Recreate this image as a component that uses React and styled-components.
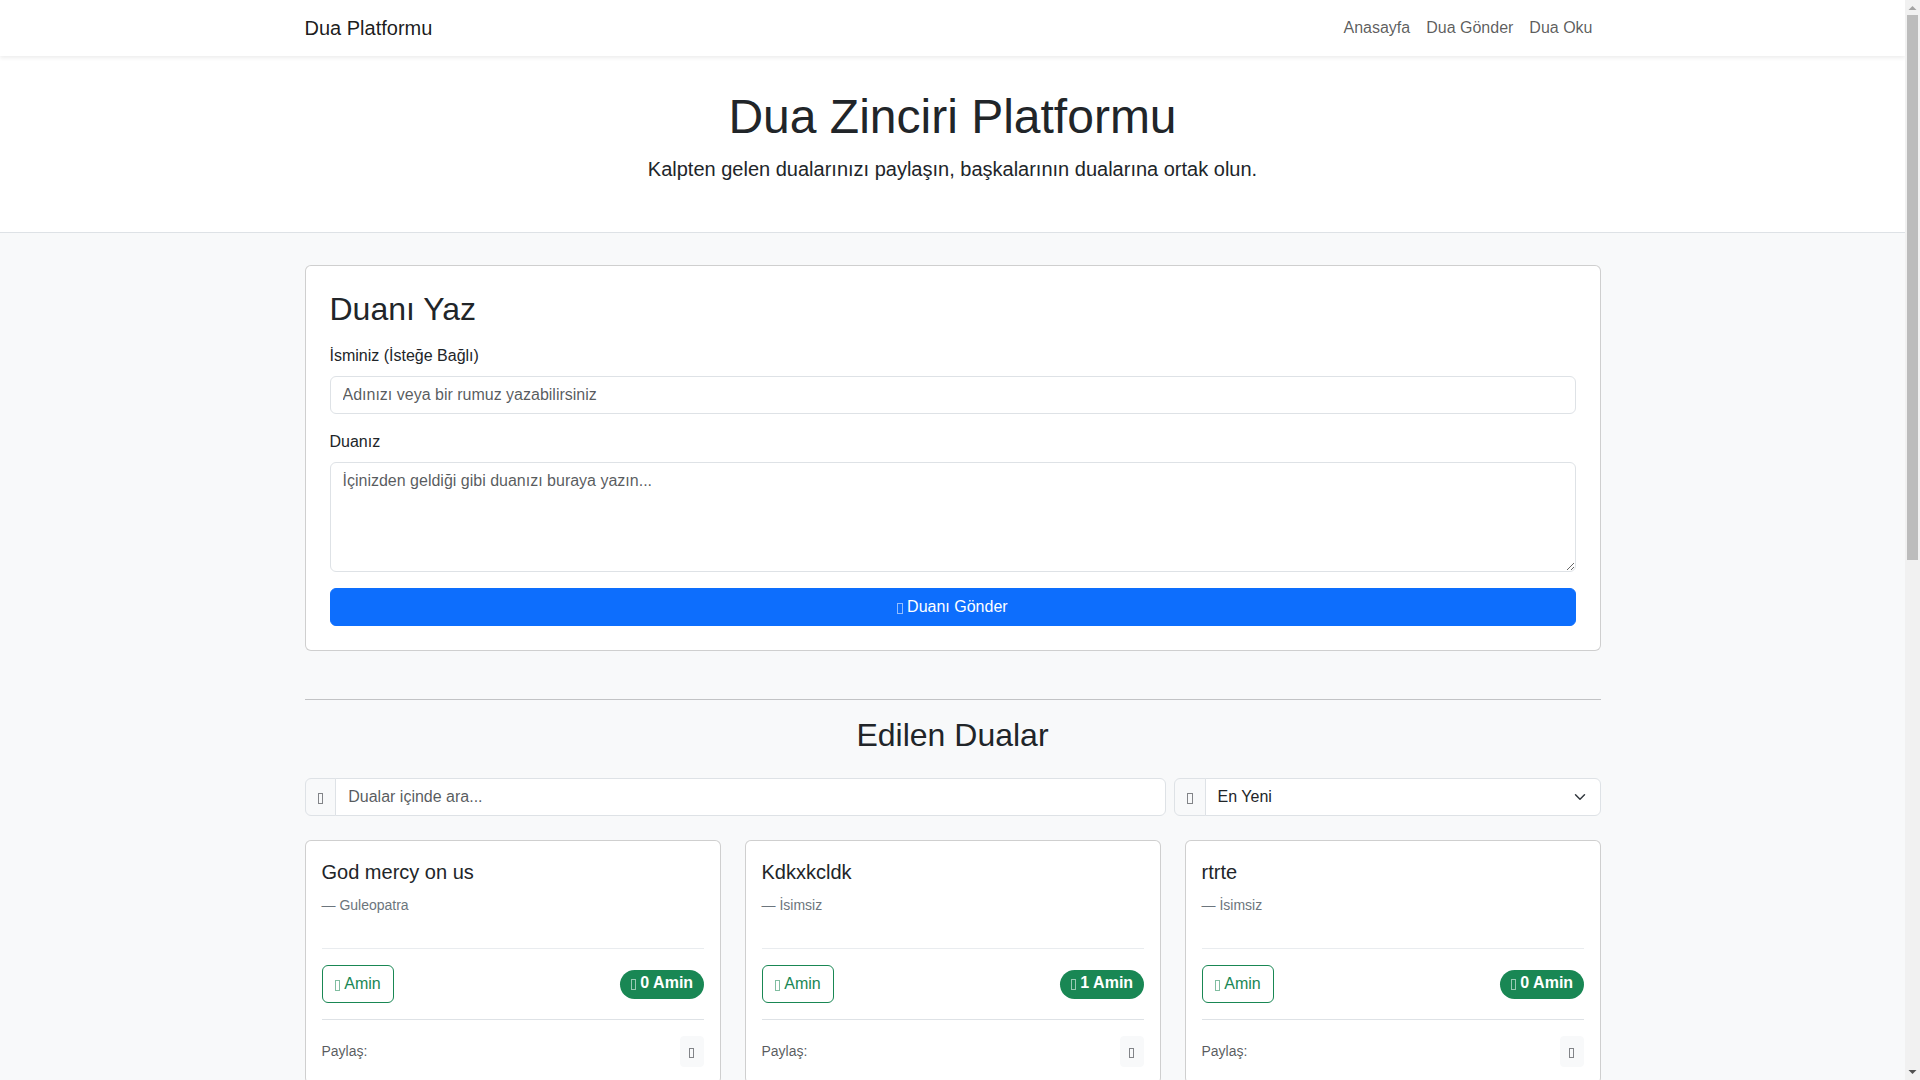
import React from "react";
import styled, { createGlobalStyle } from "styled-components";

const Global = createGlobalStyle`
  *, *::before, *::after { box-sizing: border-box; }
  html, body { margin: 0; padding: 0; }
  body {
    background: #f8f9fa;
    color: #212529;
    font-family: "Liberation Sans", Arial, sans-serif;
    font-size: 16px;
    line-height: 1.5;
    padding-right: 15px;
  }
`;

const Page = styled.div`
  min-height: 2080px;
`;

const ScrollTrack = styled.div`
  position: fixed;
  top: 0;
  right: 0;
  bottom: 0;
  width: 15px;
  background: #f1f1f1;
  display: flex;
  flex-direction: column;
  justify-content: space-between;
  z-index: 10;
`;

const ScrollThumb = styled.div`
  position: absolute;
  top: 15px;
  left: 2px;
  width: 11px;
  height: 545px;
  background: #bcbcbc;
`;

const ScrollArrow = styled.svg`
  display: block;
  width: 15px;
  height: 15px;
`;

const Container = styled.div`
  width: 100%;
  max-width: 1320px;
  margin: 0 auto;
  padding: 0 12px;
`;

const NavBar = styled.nav`
  background: #fff;
  padding: 8px 0;
  box-shadow: 0 2px 4px rgba(0, 0, 0, 0.075);
  position: relative;
`;

const NavInner = styled(Container)`
  display: flex;
  align-items: center;
  justify-content: space-between;
`;

const Brand = styled.a`
  font-size: 20px;
  line-height: 30px;
  padding: 5px 0;
  color: rgba(0, 0, 0, 0.9);
`;

const NavLinks = styled.div`
  display: flex;
`;

const NavLink = styled.a`
  padding: 8px;
  color: rgba(0, 0, 0, 0.65);
`;

const Hero = styled.header`
  background: #fff;
  border-bottom: 1px solid #dee2e6;
  padding: 32px 0;
  text-align: center;
`;

const HeroTitle = styled.h1`
  margin: 0 0 8px;
  font-size: 48px;
  line-height: 1.2;
  font-weight: 300;
`;

const Lead = styled.p`
  margin: 0 0 16px;
  font-size: 20px;
  font-weight: 300;
`;

const Main = styled(Container)`
  padding-top: 32px;
`;

const Card = styled.section`
  background: #fff;
  border: 1px solid rgba(0, 0, 0, 0.19);
  border-radius: 6px;
`;

const FormCard = styled(Card)`
  padding: 24px;
  margin-bottom: 48px;
`;

const FormTitle = styled.h2`
  margin: 0 0 16px;
  font-size: 32px;
  line-height: 1.2;
  font-weight: 500;
`;

const Field = styled.div`
  margin-bottom: 16px;
`;

const Label = styled.label`
  display: block;
  margin-bottom: 8px;
`;

const Input = styled.input`
  display: block;
  width: 100%;
  height: 38px;
  min-width: 0;
  padding: 6px 12px;
  font: inherit;
  color: #212529;
  background: #fff;
  border: 1px solid #dee2e6;
  border-radius: 6px;
  outline: none;
  &::placeholder { color: rgba(33, 37, 41, 0.75); opacity: 1; }
`;

const TextArea = styled.textarea`
  display: block;
  width: 100%;
  height: 110px;
  padding: 6px 12px;
  font: inherit;
  color: #212529;
  background: #fff;
  border: 1px solid #dee2e6;
  border-radius: 6px;
  outline: none;
  resize: vertical;
  &::placeholder { color: rgba(33, 37, 41, 0.75); opacity: 1; }
`;

const SubmitButton = styled.button`
  display: block;
  width: 100%;
  height: 38px;
  padding: 6px 12px;
  font: inherit;
  color: #fff;
  background: #0d6efd;
  border: 1px solid #0d6efd;
  border-radius: 6px;
`;

/* The icon font is missing in the reference: every icon shows as a narrow hollow box. */
const MissingGlyph = styled.span`
  display: inline-block;
  width: 0.36em;
  height: 0.69em;
  border: 1px solid currentColor;
  opacity: 0.55;
  vertical-align: -0.125em;
  margin-right: ${(p) => (p.$gap ? "4px" : "0")};
`;

const Rule = styled.hr`
  margin: 16px 0;
  border: 0;
  border-top: 1px solid #212529;
  opacity: 0.25;
`;

const SectionTitle = styled.h2`
  margin: 0 0 24px;
  font-size: 32px;
  line-height: 1.2;
  font-weight: 500;
  text-align: center;
`;

const Filters = styled.div`
  display: grid;
  grid-template-columns: calc((100% + 8px) * 2 / 3 - 8px) 1fr;
  gap: 8px;
  margin-bottom: 24px;
`;

const InputGroup = styled.div`
  display: flex;
  align-items: stretch;
  & > input, & > select {
    flex: 1 1 auto;
    width: 1%;
    border-top-left-radius: 0;
    border-bottom-left-radius: 0;
    margin-left: -1px;
  }
`;

const GroupText = styled.span`
  display: block;
  padding: 6px 12px;
  background: #f8f9fa;
  border: 1px solid #dee2e6;
  border-radius: 6px 0 0 6px;
`;

const Select = styled.select`
  display: block;
  height: 38px;
  padding: 6px 36px 6px 12px;
  font: inherit;
  color: #212529;
  background-color: #fff;
  background-image: url("data:image/svg+xml,%3csvg xmlns='http://www.w3.org/2000/svg' viewBox='0 0 16 16'%3e%3cpath fill='none' stroke='%23343a40' stroke-linecap='round' stroke-linejoin='round' stroke-width='2' d='m2 5 6 6 6-6'/%3e%3c/svg%3e");
  background-repeat: no-repeat;
  background-position: right 12px center;
  background-size: 16px 12px;
  border: 1px solid #dee2e6;
  border-radius: 6px;
  outline: none;
  appearance: none;
`;

const CardGrid = styled.div`
  display: grid;
  grid-template-columns: repeat(3, minmax(0, 1fr));
  gap: 24px;
`;

const PrayerCard = styled(Card)`
  padding: 16px;
`;

const PrayerTitle = styled.h5`
  margin: 0 0 8px;
  font-size: 20px;
  line-height: 30px;
  font-weight: 500;
`;

const Author = styled.p`
  margin: 0 0 32px;
  font-size: 14px;
  color: #6c757d;
`;

const ActionRow = styled.div`
  display: flex;
  align-items: center;
  justify-content: space-between;
  border-top: 1px solid ${(p) => (p.$strong ? "#dee2e6" : "#e9ecef")};
  padding-top: 16px;
  margin-bottom: 16px;
`;

const ShareRow = styled(ActionRow)`
  margin-bottom: 0;
`;

const AminButton = styled.button`
  height: 38px;
  padding: 6px 12px;
  font: inherit;
  color: #198754;
  background: transparent;
  border: 1px solid #198754;
  border-radius: 6px;
`;

const CountBadge = styled.span`
  display: inline-block;
  padding: 5.6px 10.4px 7.4px;
  font-size: 16px;
  font-weight: 700;
  line-height: 1;
  color: #fff;
  background: #198754;
  border-radius: 999px;
  white-space: nowrap;
`;

const ShareLabel = styled.small`
  font-size: 14px;
  color: rgba(33, 37, 41, 0.75);
`;

const ShareButton = styled.button`
  height: 31px;
  min-width: 24px;
  padding: 4px 8px;
  font: inherit;
  font-size: 14px;
  line-height: 21px;
  color: #212529;
  background: #f8f9fa;
  border: 1px solid #f8f9fa;
  border-radius: 4px;
`;

const prayers = [
  { id: 1, title: "God mercy on us", author: "Guleopatra", count: 0 },
  { id: 2, title: "Kdkxkcldk", author: "İsimsiz", count: 1 },
  { id: 3, title: "rtrte", author: "İsimsiz", count: 0 },
];

export default function App() {
  return (
    <Page>
      <Global />
      <ScrollTrack aria-hidden="true">
        <ScrollArrow viewBox="0 0 15 15"><path d="M3.5 10 7.5 6 11.5 10Z" fill="#a3a3a3" /></ScrollArrow>
        <ScrollThumb />
        <ScrollArrow viewBox="0 0 15 15"><path d="M3.5 5 7.5 9 11.5 5Z" fill="#505050" /></ScrollArrow>
      </ScrollTrack>
      <NavBar>
        <NavInner>
          <Brand>Dua Platformu</Brand>
          <NavLinks>
            <NavLink>Anasayfa</NavLink>
            <NavLink>Dua Gönder</NavLink>
            <NavLink>Dua Oku</NavLink>
          </NavLinks>
        </NavInner>
      </NavBar>
      <Hero>
        <Container>
          <HeroTitle>Dua Zinciri Platformu</HeroTitle>
          <Lead>Kalpten gelen dualarınızı paylaşın, başkalarının dualarına ortak olun.</Lead>
        </Container>
      </Hero>
      <Main>
        <FormCard>
          <FormTitle>Duanı Yaz</FormTitle>
          <Field>
            <Label>İsminiz (İsteğe Bağlı)</Label>
            <Input placeholder="Adınızı veya bir rumuz yazabilirsiniz" />
          </Field>
          <Field>
            <Label>Duanız</Label>
            <TextArea placeholder="İçinizden geldiği gibi duanızı buraya yazın..." />
          </Field>
          <SubmitButton>
            <MissingGlyph $gap />Duanı Gönder
          </SubmitButton>
        </FormCard>
        <Rule />
        <SectionTitle>Edilen Dualar</SectionTitle>
        <Filters>
          <InputGroup>
            <GroupText><MissingGlyph /></GroupText>
            <Input placeholder="Dualar içinde ara..." />
          </InputGroup>
          <InputGroup>
            <GroupText><MissingGlyph /></GroupText>
            <Select defaultValue="new">
              <option value="new">En Yeni</option>
              <option value="old">En Eski</option>
            </Select>
          </InputGroup>
        </Filters>
        <CardGrid>
          {prayers.map((p) => (
            <PrayerCard key={p.id}>
              <PrayerTitle>{p.title}</PrayerTitle>
              <Author>— {p.author}</Author>
              <ActionRow>
                <AminButton><MissingGlyph $gap />Amin</AminButton>
                <CountBadge><MissingGlyph $gap />{p.count} Amin</CountBadge>
              </ActionRow>
              <ShareRow $strong>
                <ShareLabel>Paylaş:</ShareLabel>
                <ShareButton><MissingGlyph /></ShareButton>
              </ShareRow>
            </PrayerCard>
          ))}
        </CardGrid>
      </Main>
    </Page>
  );
}
